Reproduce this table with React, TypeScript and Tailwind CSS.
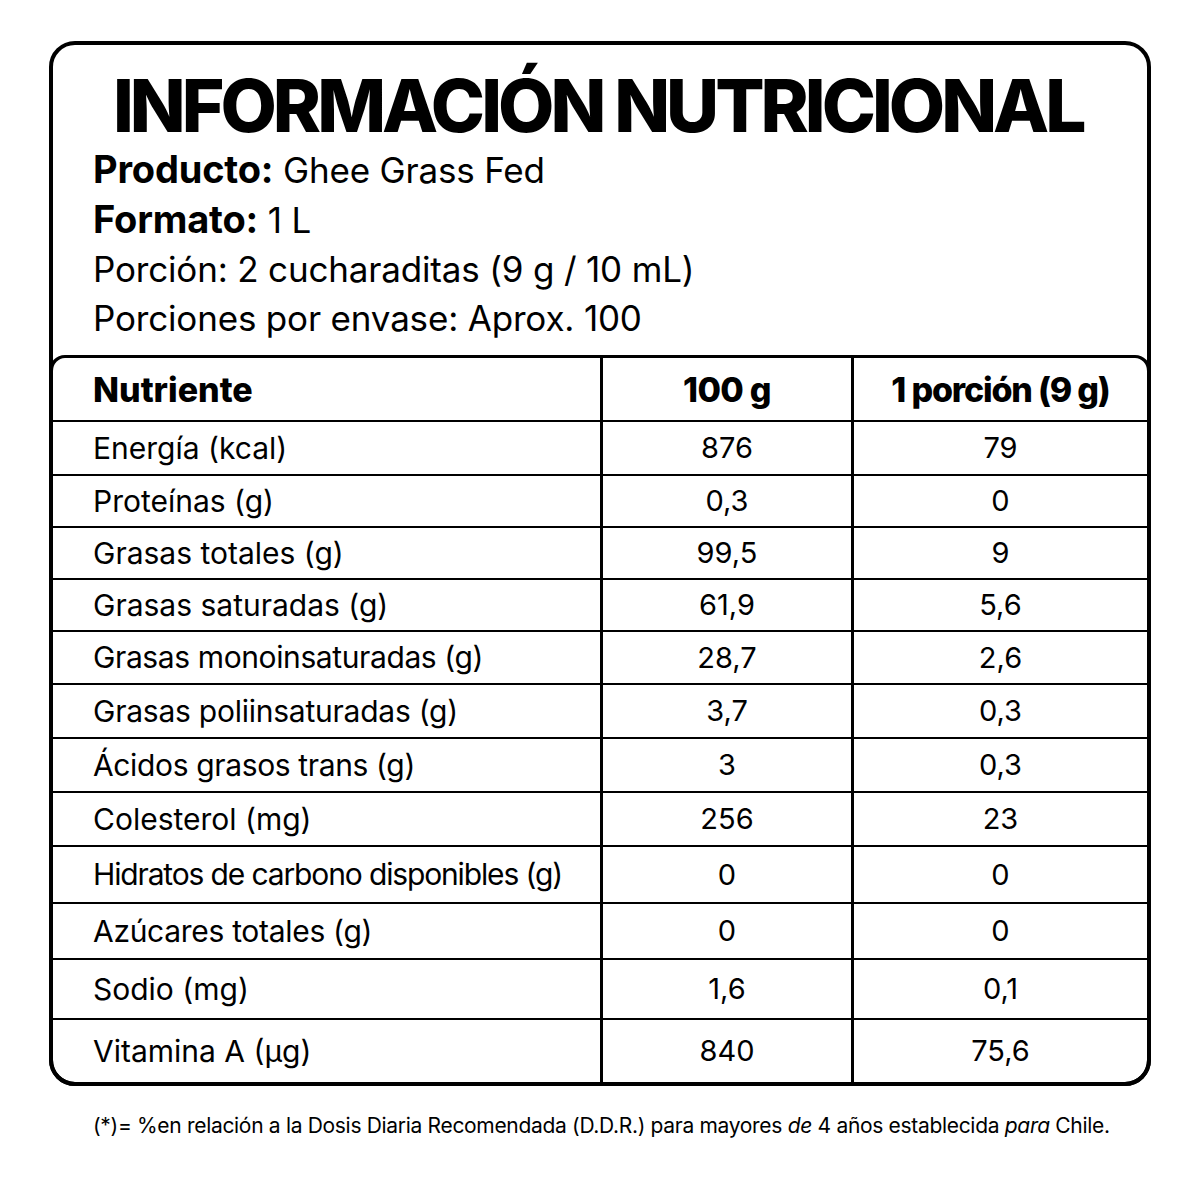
import React from "react";

const rows: { n: string; a: string; b: string; h: string; t: string }[] = [
  { n: "Energía (kcal)", a: "876", b: "79", h: "h-[54px]", t: "tracking-[0em]" },
  { n: "Proteínas (g)", a: "0,3", b: "0", h: "h-[52px]", t: "tracking-[0em]" },
  { n: "Grasas totales (g)", a: "99,5", b: "9", h: "h-[52px]", t: "tracking-[0em]" },
  { n: "Grasas saturadas (g)", a: "61,9", b: "5,6", h: "h-[52px]", t: "tracking-[0em]" },
  { n: "Grasas monoinsaturadas (g)", a: "28,7", b: "2,6", h: "h-[53px]", t: "tracking-[-0.013em]" },
  { n: "Grasas poliinsaturadas (g)", a: "3,7", b: "0,3", h: "h-[54px]", t: "tracking-[-0.008em]" },
  { n: "Ácidos grasos trans (g)", a: "3", b: "0,3", h: "h-[54px]", t: "tracking-[-0.012em]" },
  { n: "Colesterol (mg)", a: "256", b: "23", h: "h-[54px]", t: "tracking-[0em]" },
  { n: "Hidratos de carbono disponibles (g)", a: "0", b: "0", h: "h-[57px]", t: "tracking-[-0.038em]" },
  { n: "Azúcares totales (g)", a: "0", b: "0", h: "h-[56px]", t: "tracking-[-0.01em]" },
  { n: "Sodio (mg)", a: "1,6", b: "0,1", h: "h-[60px]", t: "tracking-[0em]" },
  { n: "Vitamina A (µg)", a: "840", b: "75,6", h: "h-[64px]", t: "tracking-[0em]" },
];

export default function App() {
  return (
    <div className="w-[1200px] h-[1200px] bg-white text-black font-['Inter',sans-serif] pt-[41px] pl-[49px]">
      <div className="w-[1102px] h-[1045px] border-4 border-black rounded-[26px] flex flex-col">
        <div className="pt-[24px] pl-[40px] h-[310px]">
          <div className="text-[73px] leading-none font-extrabold tracking-[-0.055em] ml-[20px] whitespace-nowrap">
            INFORMACIÓN NUTRICIONAL
          </div>
          <div className="mt-[3px] text-[35px] leading-[49px] tracking-[-0.005em] whitespace-nowrap">
            <div>
              <span className="font-bold text-[38px] tracking-[-0.005em]">Producto:</span> Ghee Grass Fed
            </div>
            <div>
              <span className="font-bold text-[38px] tracking-[-0.005em]">Formato:</span> 1 L
            </div>
            <div>Porción: 2 cucharaditas (9 g / 10 mL)</div>
            <div>Porciones por envase: Aprox. 100</div>
          </div>
        </div>
        <div className="-mx-1 -mb-1 flex-1 border-x-4 border-b-4 border-t-[3px] border-black rounded-t-[16px] rounded-b-[26px] grid grid-cols-[547px_251px_1fr] content-start">
          <div className="h-[62px] flex items-center pl-[40px] text-[34px] font-extrabold tracking-[0em]">Nutriente</div>
          <div className="h-[62px] flex items-center justify-center border-l-[3px] border-black text-[34px] font-extrabold tracking-[-0.02em]">100 g</div>
          <div className="h-[62px] flex items-center justify-center border-l-[3px] border-black text-[34px] font-extrabold tracking-[-0.035em]">1 porción (9 g)</div>
          {rows.map((r) => (
            <React.Fragment key={r.n}>
              <div className={`${r.h} ${r.t} flex items-center pl-[40px] border-t-2 border-black text-[30px] whitespace-nowrap`}>{r.n}</div>
              <div className={`${r.h} flex items-center justify-center border-t-2 border-l-[3px] border-black text-[29px]`}>{r.a}</div>
              <div className={`${r.h} flex items-center justify-center border-t-2 border-l-[3px] border-black text-[29px]`}>{r.b}</div>
            </React.Fragment>
          ))}
        </div>
      </div>
      <div className="mt-[29px] ml-[44px] text-[21px] leading-none tracking-[-0.015em] whitespace-nowrap">
        (*)= %en relación a la Dosis Diaria Recomendada (D.D.R.) para mayores <i>de</i> 4 años establecida <i>para</i> Chile.
      </div>
    </div>
  );
}
